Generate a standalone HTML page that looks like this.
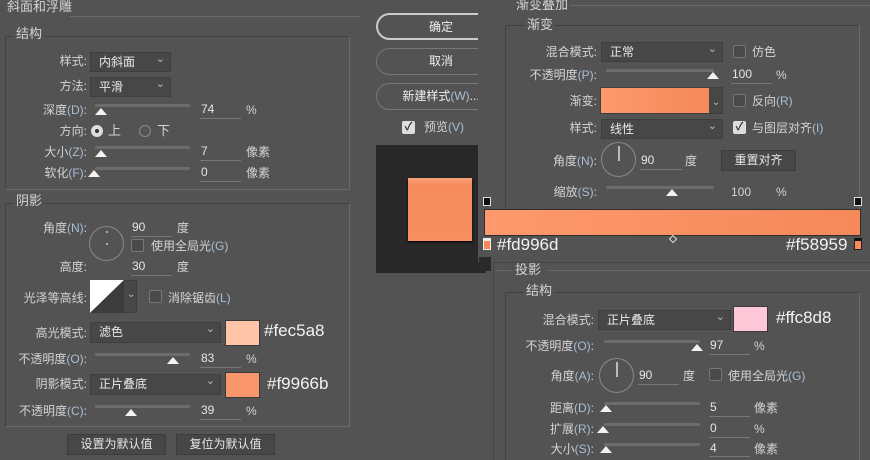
<!DOCTYPE html>
<html style="overflow:hidden;width:870px;height:460px"><head><meta charset="utf-8"><style>
*{margin:0;padding:0;box-sizing:border-box}
body{width:870px;height:460px;background:#535353;position:relative;overflow:hidden;font-family:"Liberation Sans","Noto Sans CJK SC",sans-serif;font-size:12px;color:#d4d4d4}
div,span{position:absolute}
.t{line-height:16px;white-space:nowrap}
.lb{text-align:right;line-height:16px;white-space:nowrap}
.b{color:#a9bfd6}
.gb{border:1px solid #414141;border-right-color:#6a6a6a;border-bottom-color:#6a6a6a}
.dd{background:#474747;border:1px solid #3e3e3e;line-height:18px;padding-left:8px;color:#e8e8e8}
.dd:after{content:"⌄";position:absolute;right:5px;top:-3px;font-size:11px;color:#bbb}
.tr{height:3px;background:#6c6c6c;border-radius:1px}
.th{width:0;height:0;border-left:6px solid transparent;border-right:6px solid transparent;border-bottom:7px solid #f2f2f2}
.in{border-bottom:1px solid #777;line-height:15px;padding-left:1px;color:#e6e6e6;height:17px}
.cb{width:13px;height:13px;border:1px solid #777;border-radius:2px;background:#4a4a4a}
.ck{background:#ddd;border-color:#ddd;color:#333;font-size:11px;line-height:11px;text-align:center;font-weight:bold}
.circ{border:1px solid #8a8a8a;border-radius:50%}
.btn{border:1px solid #3c3c3c;background:#474747;text-align:center;line-height:18px;color:#e6e6e6}
.hex{font-size:17px;color:#f2f2f2;line-height:20px}
.rb{border:1px solid #777;border-radius:14px;text-align:center;line-height:24px;color:#eee}
</style></head><body>

<!-- LEFT PANEL -->
<div style="left:70px;top:16px;width:290px;height:1px;background:#6a6a6a"></div>
<div class="t" style="left:7px;top:-1px;font-size:13px">斜面和浮雕</div>
<div class="gb" style="left:5px;top:36px;width:345px;height:154px"></div>
<div class="t" style="left:14px;top:26px;font-size:13px;background:#535353;padding:0 2px">结构</div>
<div class="lb" style="left:0;width:87px;top:53px">样式:</div>
<div class="dd" style="left:90px;top:52px;width:81px;height:20px">内斜面</div>
<div class="lb" style="left:0;width:87px;top:78px">方法:</div>
<div class="dd" style="left:90px;top:77px;width:81px;height:20px">平滑</div>
<div class="lb" style="left:0;width:87px;top:102px">深度<span class="b" style="position:static">(D)</span>:</div>
<div class="tr" style="left:95px;top:104px;width:95px"></div>
<div class="th" style="left:95px;top:108px"></div>
<div class="in" style="left:200px;top:102px;width:41px">74</div>
<div class="t" style="left:246px;top:102px">%</div>
<div class="lb" style="left:0;width:87px;top:123px">方向:</div>
<div class="circ" style="left:91px;top:125px;width:12px;height:12px;background:#ddd;border-color:#ddd"><span style="left:3px;top:3px;width:4px;height:4px;background:#333;border-radius:50%"></span></div>
<div class="t" style="left:108px;top:123px;font-size:13px">上</div>
<div class="circ" style="left:139px;top:125px;width:12px;height:12px"></div>
<div class="t" style="left:157px;top:123px;font-size:13px">下</div>
<div class="lb" style="left:0;width:87px;top:144px">大小<span class="b" style="position:static">(Z)</span>:</div>
<div class="tr" style="left:95px;top:146px;width:95px"></div>
<div class="th" style="left:95px;top:150px"></div>
<div class="in" style="left:200px;top:144px;width:41px">7</div>
<div class="t" style="left:246px;top:144px">像素</div>
<div class="lb" style="left:0;width:87px;top:165px">软化<span class="b" style="position:static">(F)</span>:</div>
<div class="tr" style="left:95px;top:167px;width:95px"></div>
<div class="th" style="left:88px;top:170px"></div>
<div class="in" style="left:200px;top:165px;width:41px">0</div>
<div class="t" style="left:246px;top:165px">像素</div>

<div class="gb" style="left:5px;top:203px;width:345px;height:224px"></div>
<div class="t" style="left:14px;top:193px;font-size:13px;background:#535353;padding:0 2px">阴影</div>
<div class="lb" style="left:0;width:87px;top:220px">角度<span class="b" style="position:static">(N)</span>:</div>
<div class="circ" style="left:89px;top:226px;width:35px;height:35px"><span style="left:16px;top:16px;width:2px;height:2px;background:#aaa"></span><span style="left:16px;top:4px;width:2px;height:2px;background:#aaa"></span></div>
<div class="in" style="left:131px;top:220px;width:41px">90</div>
<div class="t" style="left:177px;top:220px">度</div>
<div class="cb" style="left:131px;top:239px"></div>
<div class="t" style="left:151px;top:238px">使用全局光<span class="b" style="position:static">(G)</span></div>
<div class="lb" style="left:0;width:87px;top:259px">高度:</div>
<div class="in" style="left:131px;top:259px;width:41px">30</div>
<div class="t" style="left:177px;top:259px">度</div>
<div class="lb" style="left:0;width:87px;top:290px">光泽等高线:</div>
<div style="left:90px;top:280px;width:47px;height:33px;background:#474747;border:1px solid #3e3e3e"></div>
<svg style="position:absolute;left:90px;top:280px" width="35" height="33"><polygon points="0,0 34,0 0,33" fill="#fff"/><polygon points="34,0 34,33 0,33" fill="#3c3c3c"/></svg>
<div class="t" style="left:127px;top:287px;font-size:10px;color:#bbb">⌄</div>
<div class="cb" style="left:149px;top:290px"></div>
<div class="t" style="left:168px;top:290px">消除锯齿<span class="b" style="position:static">(L)</span></div>
<div class="lb" style="left:0;width:87px;top:325px">高光模式:</div>
<div class="dd" style="left:90px;top:322px;width:131px;height:21px;line-height:19px">滤色</div>
<div style="left:225px;top:320px;width:35px;height:26px;background:#fec5a8;border:1px solid #3a3a3a"></div>
<div class="hex" style="left:264px;top:321px">#fec5a8</div>
<div class="lb" style="left:0;width:87px;top:351px">不透明度<span class="b" style="position:static">(O)</span>:</div>
<div class="tr" style="left:95px;top:353px;width:95px"></div>
<div class="th" style="left:167px;top:357px"></div>
<div class="in" style="left:200px;top:351px;width:41px">83</div>
<div class="t" style="left:246px;top:351px">%</div>
<div class="lb" style="left:0;width:87px;top:376px">阴影模式:</div>
<div class="dd" style="left:90px;top:374px;width:131px;height:21px;line-height:19px">正片叠底</div>
<div style="left:225px;top:372px;width:35px;height:26px;background:#f9966b;border:1px solid #3a3a3a"></div>
<div class="hex" style="left:267px;top:374px">#f9966b</div>
<div class="lb" style="left:0;width:87px;top:403px">不透明度<span class="b" style="position:static">(C)</span>:</div>
<div class="tr" style="left:95px;top:405px;width:95px"></div>
<div class="th" style="left:125px;top:409px"></div>
<div class="in" style="left:200px;top:403px;width:41px">39</div>
<div class="t" style="left:246px;top:403px">%</div>
<div class="btn" style="left:67px;top:434px;width:99px;height:21px">设置为默认值</div>
<div class="btn" style="left:176px;top:434px;width:99px;height:21px">复位为默认值</div>

<!-- MIDDLE -->
<div class="rb" style="left:376px;top:13px;width:130px;height:27px;border-color:#ccc;border-width:2px">确定</div>
<div class="rb" style="left:376px;top:48px;width:130px;height:27px">取消</div>
<div class="rb" style="left:376px;top:83px;width:130px;height:27px">新建样式<span class="b" style="position:static">(W)</span>...</div>
<div class="cb ck" style="left:402px;top:121px">✓</div>
<div class="t" style="left:424px;top:119px">预览<span class="b" style="position:static">(V)</span></div>
<div style="left:376px;top:145px;width:110px;height:128px;background:#282828"></div>
<div style="left:408px;top:178px;width:64px;height:63px;background:linear-gradient(#fba57b,#f68c5d 10%,#f88f60);box-shadow:0 1px 2px #000"></div>

<!-- RIGHT TOP PANEL -->
<div style="left:478px;top:0;width:392px;height:262px;background:#535353"></div>
<div style="left:570px;top:5px;width:300px;height:1px;background:#6a6a6a"></div>
<div class="t" style="left:516px;top:-3px;font-size:13px">渐变叠加</div>
<div class="gb" style="left:505px;top:25px;width:355px;height:185px"></div>
<div class="t" style="left:525px;top:17px;font-size:13px;background:#535353;padding:0 2px">渐变</div>
<div class="lb" style="left:500px;width:97px;top:44px">混合模式:</div>
<div class="dd" style="left:601px;top:42px;width:122px;height:20px">正常</div>
<div class="cb" style="left:733px;top:45px"></div>
<div class="t" style="left:752px;top:44px">仿色</div>
<div class="lb" style="left:500px;width:97px;top:67px">不透明度<span class="b" style="position:static">(P)</span>:</div>
<div class="tr" style="left:606px;top:69px;width:108px"></div>
<div class="th" style="left:707px;top:72px"></div>
<div class="in" style="left:731px;top:67px;width:41px">100</div>
<div class="t" style="left:776px;top:67px">%</div>
<div class="lb" style="left:500px;width:97px;top:93px">渐变:</div>
<div style="left:600px;top:87px;width:123px;height:27px;background:#474747;border:1px solid #3e3e3e"></div>
<div style="left:601px;top:88px;width:108px;height:25px;background:linear-gradient(90deg,#fd996d,#f58959)"></div>
<div class="t" style="left:712px;top:95px;font-size:10px;color:#bbb">⌄</div>
<div class="cb" style="left:733px;top:94px"></div>
<div class="t" style="left:752px;top:93px">反向<span class="b" style="position:static">(R)</span></div>
<div class="lb" style="left:500px;width:97px;top:120px">样式:</div>
<div class="dd" style="left:601px;top:119px;width:122px;height:20px">线性</div>
<div class="cb ck" style="left:733px;top:121px">✓</div>
<div class="t" style="left:752px;top:120px">与图层对齐<span class="b" style="position:static">(I)</span></div>
<div class="lb" style="left:500px;width:97px;top:153px">角度<span class="b" style="position:static">(N)</span>:</div>
<div class="circ" style="left:601px;top:142px;width:35px;height:35px"><span style="left:16px;top:3px;width:2px;height:15px;background:#bbb"></span></div>
<div class="in" style="left:640px;top:153px;width:42px">90</div>
<div class="t" style="left:685px;top:153px">度</div>
<div class="btn" style="left:721px;top:150px;width:75px;height:21px">重置对齐</div>
<div class="lb" style="left:500px;width:97px;top:184px">缩放<span class="b" style="position:static">(S)</span>:</div>
<div class="tr" style="left:606px;top:186px;width:108px"></div>
<div class="th" style="left:666px;top:189px"></div>
<div class="t" style="left:731px;top:184px">100</div>
<div class="t" style="left:776px;top:184px">%</div>
<div style="left:484px;top:209px;width:377px;height:27px;background:linear-gradient(90deg,#fd996d,#f58959);border:1px solid #2e2e2e"></div>
<div style="left:483px;top:197px;width:8px;height:9px;background:#111;border:1px solid #ddd"></div>
<div style="left:854px;top:197px;width:8px;height:9px;background:#111;border:1px solid #ddd"></div>
<div style="left:483px;top:238px;width:8px;height:12px;background:#f58959;border:1px solid #eee;border-top:3px solid #eee"></div>
<div style="left:854px;top:238px;width:8px;height:12px;background:#f58959;border:1px solid #222;border-top:3px solid #111"></div>
<div style="left:670px;top:236px;width:6px;height:6px;border:1px solid #ddd;transform:rotate(45deg)"></div>
<div class="hex" style="left:497px;top:235px">#fd996d</div>
<div class="hex" style="left:786px;top:235px">#f58959</div>

<!-- RIGHT BOTTOM PANEL -->
<div style="left:479px;top:257px;width:12px;height:14px;background:#2a2a2a"></div>
<div style="left:493px;top:262px;width:377px;height:198px;background:#535353;border-left:1px solid #474747;border-top:1px solid #474747"></div>
<div style="left:548px;top:270px;width:322px;height:1px;background:#6a6a6a"></div>
<div style="left:496px;top:270px;width:15px;height:1px;background:#6a6a6a"></div>
<div class="t" style="left:515px;top:262px;font-size:13px">投影</div>
<div class="gb" style="left:505px;top:292px;width:355px;height:168px;border-bottom:none"></div>
<div class="t" style="left:524px;top:283px;font-size:13px;background:#535353;padding:0 2px">结构</div>
<div class="lb" style="left:500px;width:94px;top:312px">混合模式:</div>
<div class="dd" style="left:598px;top:310px;width:133px;height:20px">正片叠底</div>
<div style="left:733px;top:306px;width:35px;height:26px;background:#ffc8d8;border:1px solid #3a3a3a"></div>
<div class="hex" style="left:776px;top:308px">#ffc8d8</div>
<div class="lb" style="left:500px;width:94px;top:338px">不透明度<span class="b" style="position:static">(O)</span>:</div>
<div class="tr" style="left:604px;top:340px;width:96px"></div>
<div class="th" style="left:691px;top:344px"></div>
<div class="in" style="left:709px;top:338px;width:41px">97</div>
<div class="t" style="left:754px;top:338px">%</div>
<div class="lb" style="left:500px;width:94px;top:368px">角度<span class="b" style="position:static">(A)</span>:</div>
<div class="circ" style="left:599px;top:358px;width:35px;height:35px"><span style="left:16px;top:3px;width:2px;height:15px;background:#bbb"></span></div>
<div class="in" style="left:638px;top:368px;width:41px">90</div>
<div class="t" style="left:683px;top:368px">度</div>
<div class="cb" style="left:709px;top:368px"></div>
<div class="t" style="left:728px;top:368px">使用全局光<span class="b" style="position:static">(G)</span></div>
<div class="lb" style="left:500px;width:94px;top:400px">距离<span class="b" style="position:static">(D)</span>:</div>
<div class="tr" style="left:604px;top:402px;width:96px"></div>
<div class="th" style="left:600px;top:405px"></div>
<div class="in" style="left:709px;top:400px;width:41px">5</div>
<div class="t" style="left:754px;top:400px">像素</div>
<div class="lb" style="left:500px;width:94px;top:421px">扩展<span class="b" style="position:static">(R)</span>:</div>
<div class="tr" style="left:604px;top:423px;width:96px"></div>
<div class="th" style="left:597px;top:426px"></div>
<div class="in" style="left:709px;top:421px;width:41px">0</div>
<div class="t" style="left:754px;top:421px">%</div>
<div class="lb" style="left:500px;width:94px;top:441px">大小<span class="b" style="position:static">(S)</span>:</div>
<div class="tr" style="left:604px;top:443px;width:96px"></div>
<div class="th" style="left:600px;top:446px"></div>
<div class="in" style="left:709px;top:441px;width:41px;height:16px">4</div>
<div class="t" style="left:754px;top:441px">像素</div>
</body></html>
